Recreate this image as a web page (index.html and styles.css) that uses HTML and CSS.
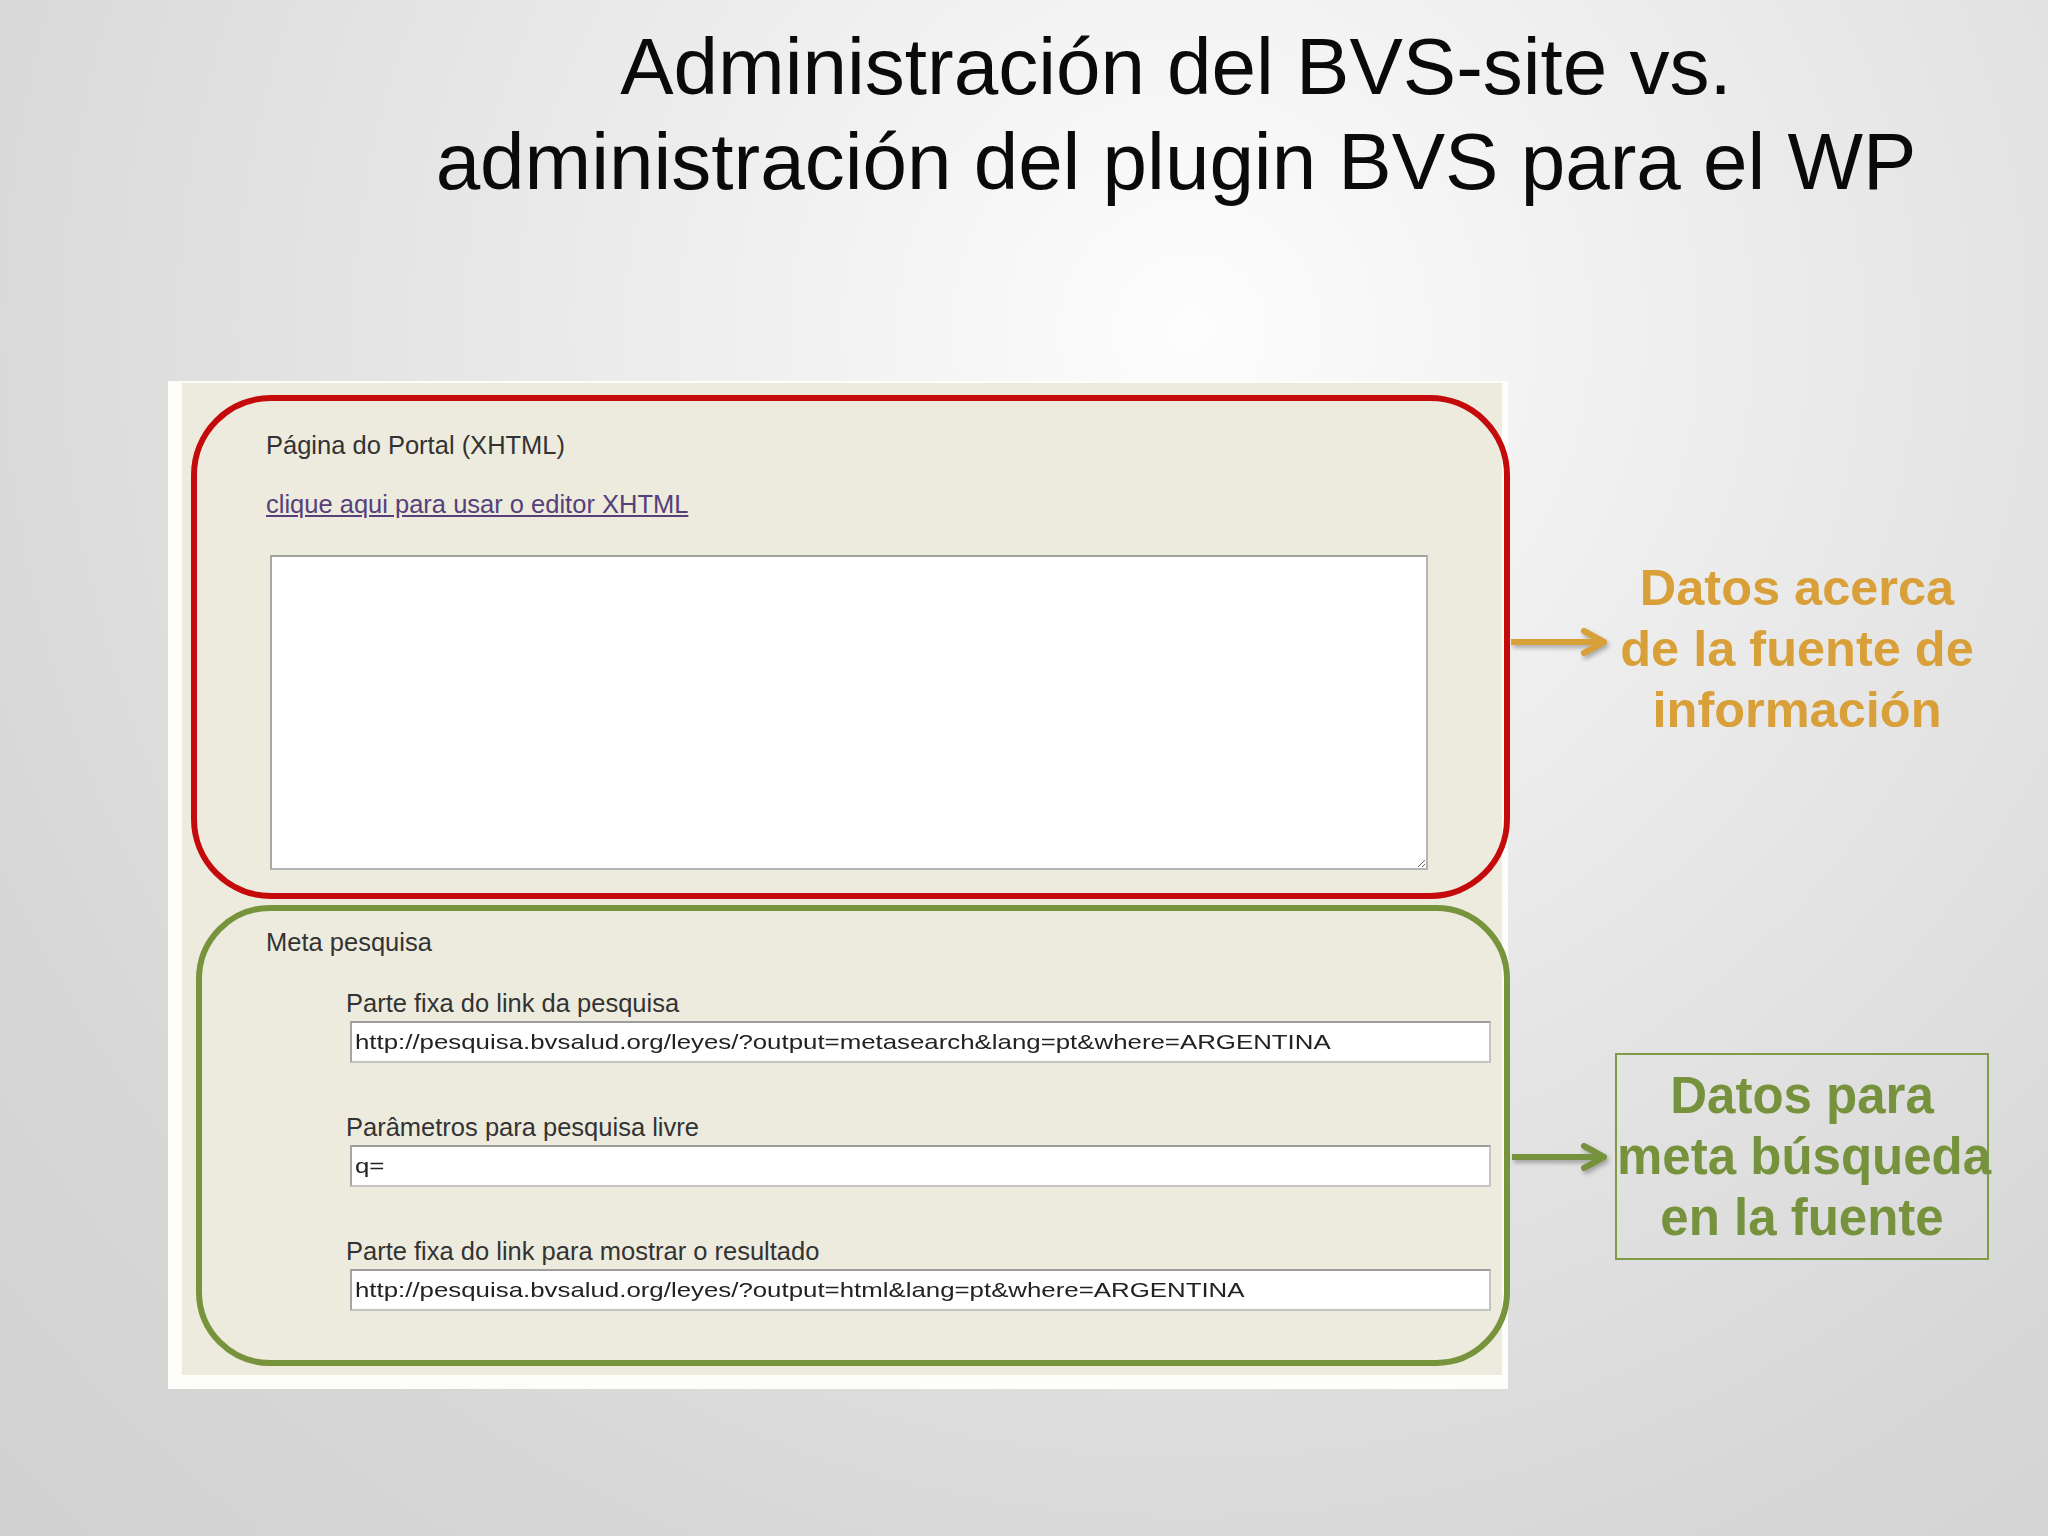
FILE: index.html
```html
<!DOCTYPE html>
<html lang="es">
<head>
<meta charset="utf-8">
<title>Administración del BVS-site vs. administración del plugin BVS para el WP</title>
<link rel="stylesheet" href="styles.css">
</head>
<body>
<div class="slide">
  <header class="title">
    <h1>Administración del BVS-site vs.<br>administración del plugin BVS para el WP</h1>
  </header>

  <main class="main">
    <div class="panel">
      <section class="frame frame-red">
        <div class="label">Página do Portal (XHTML)</div>
        <a class="editor-link" href="#">clique aqui para usar o editor XHTML</a>
        <textarea class="portal-text" readonly></textarea>
      </section>

      <section class="frame frame-green">
        <div class="label">Meta pesquisa</div>
        <div class="field">
          <div class="label">Parte fixa do link da pesquisa</div>
          <div class="input"><span class="input-text">http://pesquisa.bvsalud.org/leyes/?output=metasearch&amp;lang=pt&amp;where=ARGENTINA</span></div>
        </div>
        <div class="field">
          <div class="label">Parâmetros para pesquisa livre</div>
          <div class="input"><span class="input-text">q=</span></div>
        </div>
        <div class="field">
          <div class="label">Parte fixa do link para mostrar o resultado</div>
          <div class="input"><span class="input-text">http://pesquisa.bvsalud.org/leyes/?output=html&amp;lang=pt&amp;where=ARGENTINA</span></div>
        </div>
      </section>
    </div>

    <aside class="callouts">
      <div class="callout callout-orange">
        <svg class="arrow" width="96" height="30" viewBox="0 0 96 30">
          <path d="M0 15 H92 M73 4 L93 15 L73 26" fill="none" stroke="#d99f38" stroke-width="6" stroke-linecap="round" stroke-linejoin="round"/>
        </svg>
        <div class="callout-text">Datos acerca<br>de la fuente de<br>información</div>
      </div>

      <div class="callout callout-green">
        <svg class="arrow" width="95" height="30" viewBox="0 0 95 30">
          <path d="M0 15 H91 M72 4 L92 15 L72 26" fill="none" stroke="#76923c" stroke-width="6" stroke-linecap="round" stroke-linejoin="round"/>
        </svg>
        <div class="callout-box">Datos para<br>meta búsqueda<br>en la fuente</div>
      </div>
    </aside>
  </main>
</div>
</body>
</html>
```

FILE: styles.css
```css
html, body {
  margin: 0;
  padding: 0;
}

body {
  width: 2048px;
  height: 1536px;
  overflow: hidden;
  font-family: "Liberation Sans", Arial, sans-serif;
  background: radial-gradient(circle at 1190px 330px, #fdfdfd 0, #f4f4f4 300px, #e5e5e5 800px, #d7d7d7 1300px, #d1d1d1 1700px);
}

.slide {
  width: 2048px;
  height: 1536px;
}

.title {
  padding: 19px 0 0 304px;
  text-align: center;
}

.title h1 {
  margin: 0;
  font-weight: normal;
  font-size: 80px;
  line-height: 95px;
  color: #0a0a0a;
}

.main {
  display: flex;
  align-items: flex-start;
  margin-top: 172px;
}

/* ---------- screenshot panel ---------- */
.panel {
  box-sizing: border-box;
  margin-left: 168px;
  width: 1340px;
  background: #edebde;
  border-style: solid;
  border-color: #fdfdfa;
  border-width: 2px 6px 14px 14px;
  padding: 12px 0 9px 0;
}

.frame {
  box-sizing: border-box;
  border-style: solid;
  border-width: 6px;
}

.frame-red {
  border-color: #c40a0a;
  border-radius: 80px;
  margin: 0 -8px 0 9px;
  height: 504px;
  padding: 29px 0 0 69px;
}

.frame-green {
  border-color: #77933c;
  border-radius: 74px;
  margin: 6px -8px 0 14px;
  height: 461px;
  padding: 16px 0 0 64px;
}

.label {
  font-size: 25.5px;
  line-height: 30px;
  color: #333;
}

.editor-link {
  display: block;
  margin-top: 29px;
  font-size: 25.5px;
  line-height: 30px;
  color: #55407a;
  text-decoration: underline;
  width: max-content;
}

.portal-text {
  display: block;
  box-sizing: border-box;
  margin: 36px 0 0 4px;
  width: 1158px;
  height: 315px;
  background: #fff;
  border: 2px solid #b4b4b4;
  border-top-color: #a2a2a2;
  border-left-color: #a8a8a8;
  resize: both;
  padding: 0;
}

.field {
  margin-left: 80px;
}

.frame-green > .label + .field {
  margin-top: 31px;
}

.field + .field {
  margin-top: 49px;
}

.field .input {
  box-sizing: border-box;
  margin: 3px 0 0 4px;
  width: 1141px;
  height: 42px;
  background: #fff;
  border: 2px solid #c4c4c4;
  border-top-color: #9d9d9d;
  border-left-color: #a5a5a5;
  padding-left: 3px;
  display: flex;
  align-items: center;
  overflow: hidden;
}

.input-text {
  display: inline-block;
  font-size: 21px;
  line-height: 26px;
  color: #222;
  white-space: nowrap;
  transform: scaleX(1.23);
  transform-origin: left center;
}

/* ---------- callouts ---------- */
.callouts {
  display: flex;
  flex-direction: column;
  margin-top: 176px;
}

.callout {
  display: flex;
  align-items: center;
}

.arrow {
  display: block;
  filter: drop-shadow(2px 3px 2px rgba(0, 0, 0, 0.28));
}

.callout-orange .arrow {
  margin: 0 0 14px 3px;
}

.callout-text {
  width: 380px;
  text-align: center;
  font-weight: bold;
  font-size: 50.5px;
  line-height: 61px;
  color: #d99f38;
  white-space: nowrap;
}

.callout-green {
  margin-top: 313px;
}

.callout-green .arrow {
  margin-left: 4px;
}

.callout-box {
  box-sizing: border-box;
  margin-left: 8px;
  width: 374px;
  height: 207px;
  padding-top: 10px;
  border: 2px solid #7f9b45;
  text-align: center;
  font-weight: bold;
  font-size: 51px;
  line-height: 61px;
  color: #76923c;
  white-space: nowrap;
}
```
